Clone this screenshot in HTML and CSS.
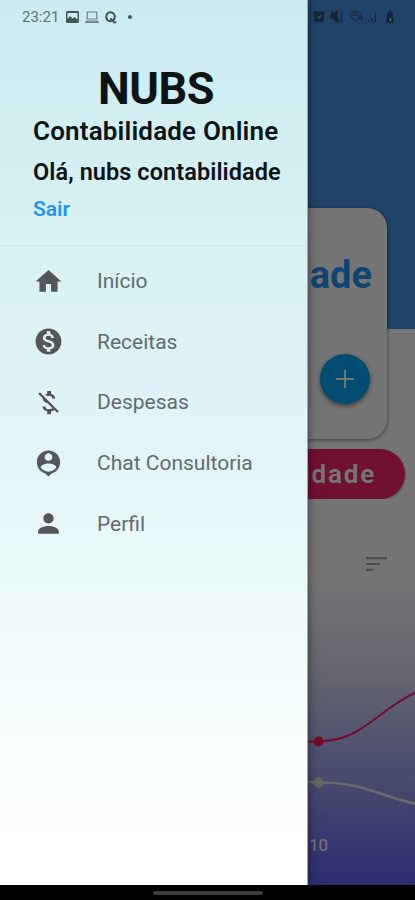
FILE: index.html
```html
<!DOCTYPE html>
<html lang="pt-BR">
<head>
    <meta charset="utf-8">
    <title>NUBS Contabilidade Online</title>
    <link rel="stylesheet" href="styles.css">
</head>
<body>
    <div class="phone">
        <!-- Home screen, under the drawer -->
        <main class="home">
            <section class="hero">
                <div class="card">
                    <h2>ade</h2>
                    <button class="add">
                        <svg width="18" height="18" viewBox="0 0 18 18"><path d="M9 0v18M0 9h18" stroke="#fff" stroke-width="2"/></svg>
                    </button>
                </div>
            </section>
            <div class="pill">idade</div>
            <section class="chart">
                <svg class="sort" width="21" height="14" viewBox="0 0 21 14"><path d="M0 1.2h21M0 7h14M0 12.8h7.500" stroke="#a8a8a8" stroke-width="2.200"/></svg>
                <svg class="lines" width="415" height="160" viewBox="0 670 415 160" fill="none">
                    <path d="M200 754C260 742 290 742 318 741.500C364 741 377 709 417 692" stroke="#f51d68" stroke-width="2"/>
                    <path d="M200 762C250 774 290 781 318 782.500C364 782 381 797 417 804" stroke="#e4e6e0" stroke-width="2.600"/>
                    <circle cx="318.500" cy="741.500" r="5" fill="#f51d58"/>
                    <circle cx="318.500" cy="782.500" r="5" fill="#dfe2d8"/>
                </svg>
                <span class="day">10</span>
            </section>
        </main>

        <div class="scrim">
            <svg class="status-right" width="84" height="16" viewBox="0 0 84 16" fill="none" stroke="#14243a" stroke-width="1.400">
                <path d="M3 3.500h8v8.500h-8zM1.500 4L4 2M10 2l2.500 2" fill="#14243a"/><path d="M5.500 7.500L7 9l2.500-3" stroke="#2c5a62"/>
                <path d="M19 6h2l4-3.500v10L21 9h-2zM19 2l9 11M29.500 3v10" fill="#14243a"/>
                <path d="M37 5q6-5 13 0l-6.500 7.500zM39 7q4-3 8 0M46 9h5m-2-2 2 2-2 2" stroke-width="1"/>
                <path d="M57 13v-2M60 13V9M63.500 13V4" stroke-width="1.200"/>
                <path d="M76 4h4l1 9h-6z" fill="#14243a"/><path d="M77 2h2"/><path d="M78.500 9v3" stroke="#527082"/>
            </svg>
        </div>

        <aside class="drawer">
            <div class="status">
                <span>23:21</span>
                <svg width="13" height="12" viewBox="0 0 13 12"><path fill="#42565a" fill-rule="evenodd" d="M1.500 0h10Q13 0 13 1.500v9Q13 12 11.500 12h-10Q0 12 0 10.500v-9Q0 0 1.500 0zM1.500 2v6l2.500-3 2.500 2.500L8.500 6l3 2.500V2z"/></svg>
                <svg width="14" height="12" viewBox="0 0 14 12" fill="none" stroke="#6b8085" stroke-width="1.200"><path d="M2.200 1h9.600v7H2.200zM1.500 10l-.8 1.300h12.600l-.8-1.300z"/></svg>
                <svg width="12" height="13" viewBox="0 0 12 13" fill="none" stroke="#42565a"><path d="M5.500 1.300C2.800 1.300 1.300 3.300 1.300 5.800s1.500 4.400 4.200 4.400S9.700 8.300 9.700 5.800 8.200 1.300 5.500 1.300z" stroke-width="2.100"/><path d="M5 8q2.500 0 3.500 3 1 1.500 2.800-.5" stroke-width="1.800"/></svg>
                <i class="dot"></i>
            </div>
            <header class="account">
                <h1>NUBS</h1>
                <p class="brand">Contabilidade Online</p>
                <p class="hello">Olá, nubs contabilidade</p>
                <a class="logout">Sair</a>
            </header>
            <nav class="menu">
                <a>
                    <svg viewBox="0 0 24 24"><path d="M10 20v-6h4v6h5v-8h3L12 3 2 12h3v8z"/></svg>
                    Início
                </a>
                <a>
                    <svg viewBox="0 0 24 24"><path d="M12 2C6.480 2 2 6.480 2 12s4.480 10 10 10 10-4.480 10-10S17.520 2 12 2zm1.410 16.090V20h-2.670v-1.930c-1.710-.36-3.160-1.460-3.270-3.400h1.960c.1 1.050.82 1.870 2.650 1.870 1.960 0 2.400-.98 2.400-1.590 0-.83-.44-1.610-2.670-2.140-2.480-.6-4.180-1.620-4.180-3.670 0-1.720 1.390-2.840 3.110-3.210V4h2.670v1.950c1.860.45 2.790 1.860 2.850 3.390H14.300c-.05-1.110-.64-1.870-2.220-1.870-1.500 0-2.400.68-2.400 1.640 0 .84.65 1.390 2.670 1.910s4.180 1.390 4.180 3.910c-.01 1.830-1.380 2.830-3.120 3.160z"/></svg>
                    Receitas
                </a>
                <a>
                    <svg viewBox="0 0 24 24"><path d="M12.500 6.900c1.780 0 2.440.85 2.500 2.100h2.210c-.07-1.720-1.120-3.300-3.210-3.810V3h-3v2.160c-.53.12-1.030.3-1.480.54l1.470 1.470c.41-.17.91-.27 1.510-.27zM5.330 4.060L4.060 5.330 7.500 8.770c0 2.080 1.560 3.210 3.910 3.910l3.510 3.510c-.34.480-1.050.910-2.420.910-2.060 0-2.870-.92-2.980-2.100h-2.200c.12 2.190 1.760 3.420 3.680 3.830V21h3v-2.150c.96-.18 1.820-.55 2.450-1.120l2.220 2.220 1.270-1.270L5.330 4.060z"/></svg>
                    Despesas
                </a>
                <a>
                    <svg viewBox="0 0 24 24"><path d="M12 2C7.030 2 3 6 3 11c0 4.170 2.800 7.680 6.620 8.690L12 22l2.340-2.310C18.190 18.700 21 15.180 21 11c0-5-4.030-9-9-9zm0 2c1.660 0 3 1.340 3 3s-1.340 3-3 3-3-1.340-3-3 1.340-3 3-3zm0 14.300c-2.500 0-4.710-1.280-6-3.220.03-1.990 4-3.080 6-3.080 1.990 0 5.970 1.090 6 3.080-1.290 1.940-3.500 3.220-6 3.220z"/></svg>
                    Chat Consultoria
                </a>
                <a>
                    <svg viewBox="0 0 24 24"><path d="M12 12c2.210 0 4-1.790 4-4s-1.790-4-4-4-4 1.790-4 4 1.790 4 4 4zm0 2c-2.670 0-8 1.340-8 4v2h16v-2c0-2.660-5.330-4-8-4z"/></svg>
                    Perfil
                </a>
            </nav>
        </aside>
    </div>
    <footer class="navbar"><div class="handle"></div></footer>
</body>
</html>
```

FILE: styles.css
```css
* {
    box-sizing: border-box;
}

body {
    margin: 0;
    width: 415px;
    height: 900px;
    overflow: hidden;
    background: #000;
    font-family: Roboto, "Noto Sans", sans-serif;
}

h1, h2, p {
    margin: 0;
}

.phone {
    position: relative;
    height: 885px;
    overflow: hidden;
}

/* Home screen */
.home {
    height: 885px;
    background: #fff;
}

.hero {
    height: 439px;
    padding: 208px 28px 0;
    background: linear-gradient(#4692e2 329px, #fff 329px);
}

.card {
    display: flex;
    flex-direction: column;
    align-items: flex-end;
    height: 231px;
    padding: 45px 15px 0;
    border-radius: 20px;
    background: #fff;
    box-shadow: 0 1px 4px rgba(0, 0, 0, .5);
}

.card h2 {
    font-size: 38px;
    line-height: 44px;
    color: #2196f3;
}

.add {
    display: flex;
    align-items: center;
    justify-content: center;
    width: 50px;
    height: 50px;
    margin: 57px 2px 0 0;
    padding: 0;
    border: 0;
    border-radius: 50%;
    background: #04a9f8;
    box-shadow: 0 2px 5px rgba(0, 0, 0, .5);
}

.pill {
    height: 50px;
    margin: 10px 10px 0;
    padding-right: 29px;
    border-radius: 25px;
    background: #f4246e;
    box-shadow: 0 1px 3px rgba(0, 0, 0, .4);
    color: #fff;
    font-size: 26px;
    font-weight: 600;
    line-height: 50px;
    letter-spacing: 1.8px;
    text-align: right;
}

.chart {
    display: flex;
    flex-direction: column;
    height: 386px;
    padding-top: 58px;
    background: linear-gradient(#fff 80px, #d7d9f2 180px, #9a9ff0 285px, #5f63f5 386px);
}

.sort {
    align-self: flex-end;
    margin-right: 28px;
}

.lines {
    margin-top: 99px;
}

.day {
    margin: 5px 0 0 309px;
    color: #fff;
    font-size: 17px;
    line-height: 20px;
}

.scrim {
    position: absolute;
    inset: 0;
    background: rgba(0, 0, 0, .54);
}

.status-right {
    position: absolute;
    top: 9px;
    left: 312px;
}

/* Drawer */
.drawer {
    position: absolute;
    top: 0;
    left: 0;
    width: 308px;
    height: 885px;
    background: linear-gradient(#cbebf0, #daf2f3 30%, #e0f3f8 46%, #e8f7f9 60%, #f8fefe 82%, #fff 97%);
    box-shadow: 0 0 10px rgba(0, 0, 0, .5);
    border-right: 1px solid #98a9ad;
}

.status {
    display: flex;
    align-items: center;
    gap: 6px;
    height: 34px;
    padding-left: 22px;
    color: #5c7277;
    font-size: 15px;
}

.status span {
    width: 38px;
}

.dot {
    width: 4px;
    height: 4px;
    margin-left: 5px;
    border-radius: 50%;
    background: #42565a;
}

.account {
    height: 212px;
    padding: 28px 0 0 33px;
    border-bottom: 1px solid #cfe8ea;
    color: #0c1418;
    font-weight: 600;
}

.account h1 {
    padding-left: 65px;
    font-size: 45px;
    font-weight: 700;
    line-height: 54px;
    letter-spacing: -.5px;
}

.brand {
    font-size: 26px;
    line-height: 31px;
    letter-spacing: .17px;
}

.hello {
    margin-top: 11px;
    font-size: 23.500px;
    line-height: 28px;
    letter-spacing: .07px;
}

.logout {
    display: block;
    margin-top: 11px;
    color: #2196f3;
    font-size: 21px;
    line-height: 25px;
}

.menu {
    padding-top: 5px;
}

.menu a {
    display: flex;
    align-items: center;
    gap: 33px;
    height: 60.600px;
    padding-left: 33px;
    color: #626c6f;
    font-size: 21px;
}

.menu svg {
    width: 31px;
    height: 31px;
    fill: #53575b;
}

/* System bar */
.navbar {
    display: flex;
    justify-content: center;
    height: 15px;
    padding-top: 6px;
}

.handle {
    width: 110px;
    height: 4px;
    border-radius: 2px;
    background: #3c3c3c;
}
```
